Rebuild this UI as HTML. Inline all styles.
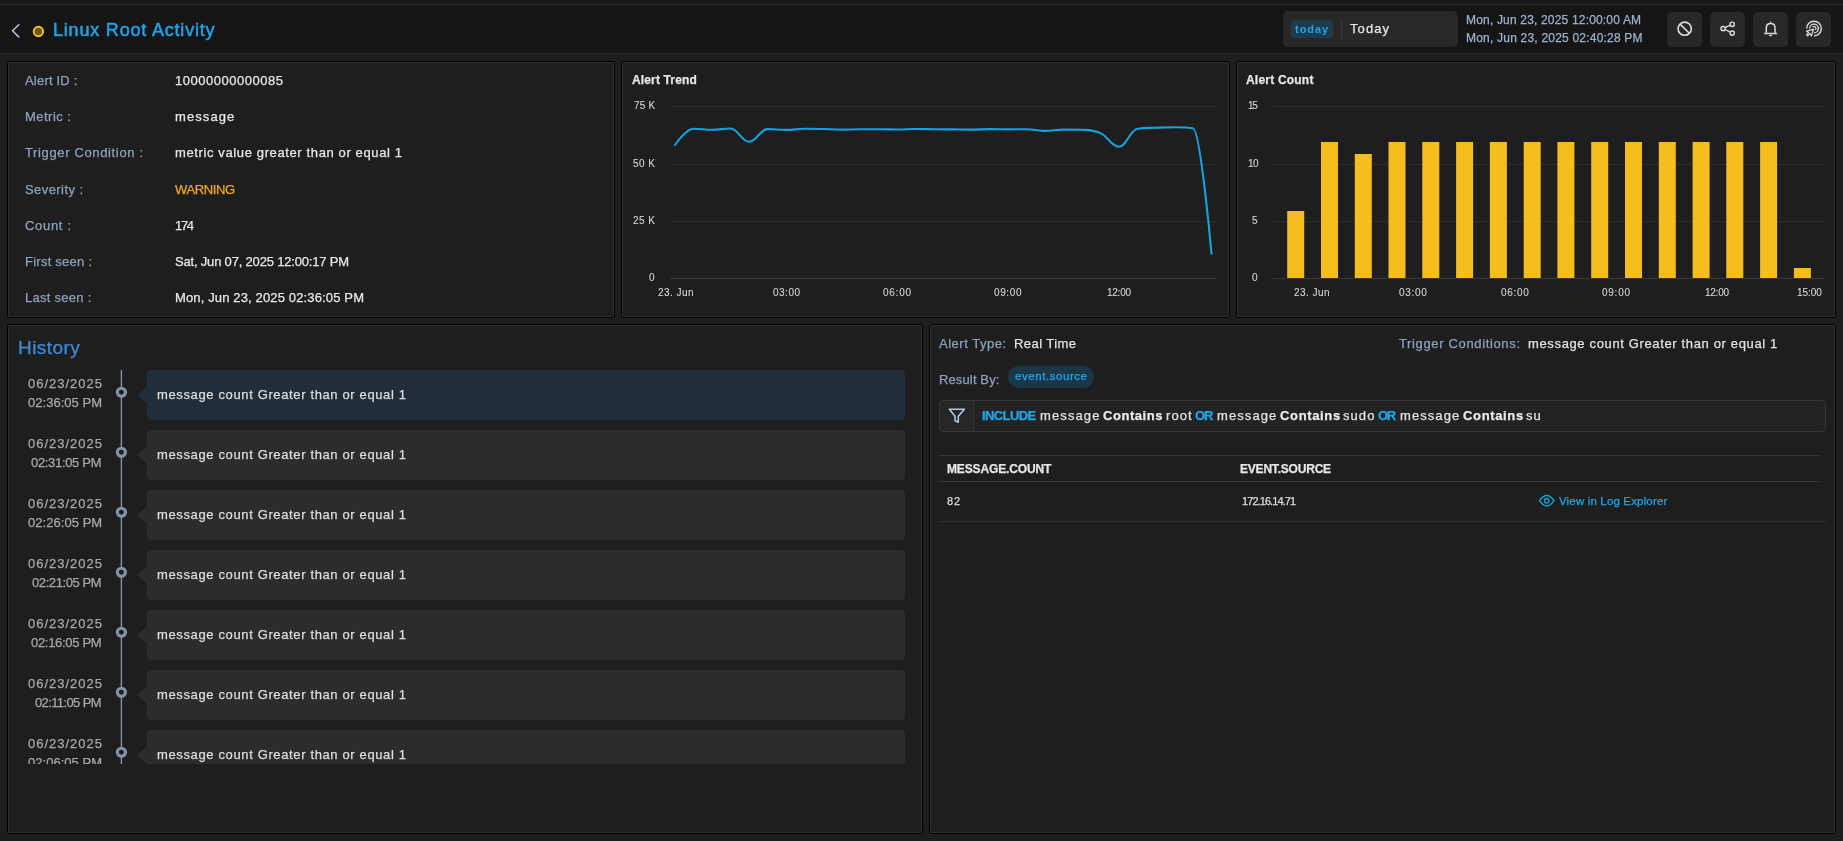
<!DOCTYPE html><html><head><meta charset="utf-8"><style>
*{margin:0;padding:0;box-sizing:content-box}
html,body{width:1843px;height:841px;overflow:hidden;background:#1d1d1d;font-family:"Liberation Sans",sans-serif}
.t{position:absolute;white-space:nowrap;line-height:1;will-change:transform;-webkit-text-stroke:0.25px currentColor}
.panel{position:absolute;background:#1e1e1e;border:1px solid #000;border-radius:2.5px;box-shadow:inset 0 0 0 1px #2e2e2e}
svg{position:absolute;overflow:visible}
</style></head><body>
<div style="position:absolute;left:0px;top:0px;width:1843px;height:4px;background:#171717;"></div>
<div style="position:absolute;left:0px;top:4px;width:1843px;height:1px;background:#303030;"></div>
<div style="position:absolute;left:0px;top:5px;width:1843px;height:48px;background:#151515;"></div>
<div style="position:absolute;left:0px;top:53px;width:1843px;height:1px;background:#262626;"></div>
<svg style="left:0;top:0" width="60" height="54"><path d="M19.2 24.2 L12.6 30.8 L19.2 37.4" fill="none" stroke="#b4c4dc" stroke-width="1.5"/><circle cx="38.4" cy="31.5" r="4.7" fill="#6a5920" stroke="#f6c21c" stroke-width="1.9"/></svg>
<div class="t" style="left:53.00px;top:20.76px;font-size:18px;color:#1ba6ea;font-weight:400;letter-spacing:0.807px;-webkit-text-stroke:0.5px currentColor;">Linux Root Activity</div>
<div style="position:absolute;left:1283px;top:11px;width:175px;height:36px;background:#282828;border-radius:5px;"></div>
<div style="position:absolute;left:1291px;top:20px;width:42px;height:18px;background:#1d3b4c;border-radius:4px;"></div>
<div class="t" style="left:1295.00px;top:23.69px;font-size:11px;color:#1ca8ec;font-weight:700;letter-spacing:0.964px;-webkit-text-stroke:0;">today</div>
<div style="position:absolute;left:1341px;top:19px;width:1px;height:20px;background:#3a3a3a;"></div>
<div class="t" style="left:1350.00px;top:22.00px;font-size:13px;color:#e8e8e8;font-weight:400;letter-spacing:1.099px;">Today</div>
<div class="t" style="left:1466.00px;top:13.84px;font-size:12px;color:#9fb2cc;font-weight:400;letter-spacing:0.178px;">Mon, Jun 23, 2025 12:00:00 AM</div>
<div class="t" style="left:1466.00px;top:31.84px;font-size:12px;color:#9fb2cc;font-weight:400;letter-spacing:0.207px;">Mon, Jun 23, 2025 02:40:28 PM</div>
<div style="position:absolute;left:1667px;top:12px;width:35px;height:35px;background:#282828;border-radius:5px;"></div>
<div style="position:absolute;left:1710px;top:12px;width:35px;height:35px;background:#282828;border-radius:5px;"></div>
<div style="position:absolute;left:1753px;top:12px;width:35px;height:35px;background:#282828;border-radius:5px;"></div>
<div style="position:absolute;left:1796px;top:12px;width:35px;height:35px;background:#282828;border-radius:5px;"></div>
<svg style="left:0;top:0" width="1843" height="54"><circle cx="1684.7" cy="28.7" r="6.6" fill="none" stroke="#dcdcdc" stroke-width="1.6"/><path d="M1680.1 24.1 L1689.3 33.3" stroke="#dcdcdc" stroke-width="1.6"/><circle cx="1732.2" cy="24.3" r="2.15" fill="none" stroke="#dcdcdc" stroke-width="1.4"/><circle cx="1723.1" cy="28.6" r="2.15" fill="none" stroke="#dcdcdc" stroke-width="1.4"/><circle cx="1732.2" cy="33.1" r="2.15" fill="none" stroke="#dcdcdc" stroke-width="1.4"/><path d="M1725 27.7 L1730.3 25.2 M1725 29.5 L1730.3 32.2" stroke="#dcdcdc" stroke-width="1.4"/><path d="M1766.3 32.6 V28 C1766.3 25.1 1768.2 23.4 1770.65 23.4 C1773.1 23.4 1775 25.1 1775 28 V32.6" fill="none" stroke="#dcdcdc" stroke-width="1.5"/><path d="M1764.2 33.5 H1777.1" stroke="#dcdcdc" stroke-width="1.5"/><path d="M1764.4 33.9 L1766.6 31.5 L1766.6 33.9 Z M1776.9 33.9 L1774.7 31.5 L1774.7 33.9 Z" fill="#dcdcdc"/><path d="M1769.7 23.8 L1770.65 20.8 L1771.6 23.8 Z" fill="#dcdcdc"/><ellipse cx="1770.65" cy="35.5" rx="1.7" ry="0.8" fill="#dcdcdc"/><path d="M1806.7 28.5 A7.3 7.3 0 1 1 1814 35.8" fill="none" stroke="#dcdcdc" stroke-width="1.4"/><path d="M1809.6 28.5 A4.4 4.4 0 1 1 1814 32.9" fill="none" stroke="#dcdcdc" stroke-width="1.4"/><path d="M1812.6 27.1 A1.9 1.9 0 0 1 1815.4 29.9" fill="none" stroke="#dcdcdc" stroke-width="1.3"/><path d="M1813.6 29.2 L1806.6 31.2 L1808.7 32.5 L1806.5 34.8 L1807.6 35.9 L1809.9 33.7 L1811.4 35.8 Z" fill="#282828" stroke="#dcdcdc" stroke-width="1.2" stroke-linejoin="round"/></svg>
<div class="panel" style="left:7px;top:61px;width:606px;height:255px;"></div>
<div class="panel" style="left:621px;top:61px;width:607px;height:255px;"></div>
<div class="panel" style="left:1236px;top:61px;width:598px;height:255px;"></div>
<div class="panel" style="left:7px;top:324px;width:914px;height:508px;"></div>
<div class="panel" style="left:929px;top:324px;width:905px;height:508px;"></div>
<div class="t" style="left:25.00px;top:74.00px;font-size:13px;color:#8ea2bd;font-weight:400;letter-spacing:0.202px;">Alert ID :</div>
<div class="t" style="left:175.00px;top:74.00px;font-size:13px;color:#e8e8e8;font-weight:400;letter-spacing:0.520px;">10000000000085</div>
<div class="t" style="left:25.00px;top:110.17px;font-size:13px;color:#8ea2bd;font-weight:400;letter-spacing:0.482px;">Metric :</div>
<div class="t" style="left:175.00px;top:110.17px;font-size:13px;color:#e8e8e8;font-weight:400;letter-spacing:1.092px;">message</div>
<div class="t" style="left:25.00px;top:146.34px;font-size:13px;color:#8ea2bd;font-weight:400;letter-spacing:0.641px;">Trigger Condition :</div>
<div class="t" style="left:175.00px;top:146.34px;font-size:13px;color:#e8e8e8;font-weight:400;letter-spacing:0.622px;">metric value greater than or equal 1</div>
<div class="t" style="left:25.00px;top:182.51px;font-size:13px;color:#8ea2bd;font-weight:400;letter-spacing:0.424px;">Severity :</div>
<div class="t" style="left:175.00px;top:182.51px;font-size:13px;color:#f0a91e;font-weight:400;letter-spacing:-0.393px;">WARNING</div>
<div class="t" style="left:25.00px;top:218.68px;font-size:13px;color:#8ea2bd;font-weight:400;letter-spacing:0.680px;">Count :</div>
<div class="t" style="left:175.00px;top:218.68px;font-size:13px;color:#e8e8e8;font-weight:400;letter-spacing:-1.352px;">174</div>
<div class="t" style="left:25.00px;top:254.85px;font-size:13px;color:#8ea2bd;font-weight:400;letter-spacing:0.246px;">First seen :</div>
<div class="t" style="left:175.00px;top:254.85px;font-size:13px;color:#e8e8e8;font-weight:400;letter-spacing:-0.188px;">Sat, Jun 07, 2025 12:00:17 PM</div>
<div class="t" style="left:25.00px;top:291.02px;font-size:13px;color:#8ea2bd;font-weight:400;letter-spacing:0.269px;">Last seen :</div>
<div class="t" style="left:175.00px;top:291.02px;font-size:13px;color:#e8e8e8;font-weight:400;letter-spacing:0.142px;">Mon, Jun 23, 2025 02:36:05 PM</div>
<div class="t" style="left:632.00px;top:74.44px;font-size:12px;color:#e6e6e6;font-weight:700;letter-spacing:0.144px;">Alert Trend</div>
<div class="t" style="left:1246.00px;top:74.44px;font-size:12px;color:#e6e6e6;font-weight:700;letter-spacing:0.207px;">Alert Count</div>
<svg style="left:0;top:0" width="1843" height="841"><rect x="670" y="106" width="547" height="1" fill="#2c2c2c"/><rect x="1273" y="106" width="551" height="1" fill="#2c2c2c"/><rect x="670" y="164" width="547" height="1" fill="#2c2c2c"/><rect x="1273" y="164" width="551" height="1" fill="#2c2c2c"/><rect x="670" y="221" width="547" height="1" fill="#2c2c2c"/><rect x="1273" y="221" width="551" height="1" fill="#2c2c2c"/><rect x="670" y="278" width="547" height="1" fill="#3a3a3a"/><rect x="1273" y="278" width="551" height="1" fill="#3a3a3a"/><path d="M675.00,145.00 C675.00,145.00 686.10,128.70 693.50,128.70 C700.90,128.70 704.60,129.80 712.00,129.80 C719.40,129.80 723.10,128.50 730.50,128.50 C737.90,128.50 741.60,141.80 749.00,141.80 C756.40,141.80 760.10,129.10 767.50,129.10 C774.90,129.10 778.60,129.90 786.00,129.90 C793.40,129.90 797.10,128.80 804.50,128.80 C811.90,128.80 815.60,128.84 823.00,129.00 C830.40,129.16 834.10,129.60 841.50,129.60 C848.90,129.60 852.60,129.38 860.00,129.30 C867.40,129.22 871.10,129.20 878.50,129.20 C885.90,129.20 889.60,129.50 897.00,129.50 C904.40,129.50 908.10,129.00 915.50,129.00 C922.90,129.00 926.60,129.22 934.00,129.30 C941.40,129.38 945.10,129.34 952.50,129.40 C959.90,129.46 963.60,129.60 971.00,129.60 C978.40,129.60 982.10,129.10 989.50,129.10 C996.90,129.10 1000.60,129.40 1008.00,129.40 C1015.40,129.40 1019.10,129.20 1026.50,129.20 C1033.90,129.20 1037.60,130.90 1045.00,130.90 C1052.40,130.90 1056.10,129.60 1063.50,129.60 C1070.90,129.60 1074.60,129.60 1082.00,129.80 C1089.40,130.00 1093.10,129.80 1100.50,133.10 C1107.90,136.40 1111.60,146.70 1119.00,146.70 C1126.40,146.70 1130.10,129.70 1137.50,128.70 C1144.90,127.70 1148.60,128.00 1156.00,127.70 C1163.40,127.40 1167.10,127.20 1174.50,127.20 C1181.90,127.20 1185.60,127.20 1193.00,128.20 C1200.40,129.20 1211.50,253.60 1211.50,253.60" fill="none" stroke="#12a3e0" stroke-width="2.1" stroke-linecap="round" stroke-linejoin="round"/><rect x="1287.2" y="211" width="17" height="67" fill="#f5bd1d"/><rect x="1321.0" y="142" width="17" height="136" fill="#f5bd1d"/><rect x="1354.8" y="154" width="17" height="124" fill="#f5bd1d"/><rect x="1388.5" y="142" width="17" height="136" fill="#f5bd1d"/><rect x="1422.3" y="142" width="17" height="136" fill="#f5bd1d"/><rect x="1456.1" y="142" width="17" height="136" fill="#f5bd1d"/><rect x="1489.9" y="142" width="17" height="136" fill="#f5bd1d"/><rect x="1523.7" y="142" width="17" height="136" fill="#f5bd1d"/><rect x="1557.4" y="142" width="17" height="136" fill="#f5bd1d"/><rect x="1591.2" y="142" width="17" height="136" fill="#f5bd1d"/><rect x="1625.0" y="142" width="17" height="136" fill="#f5bd1d"/><rect x="1658.8" y="142" width="17" height="136" fill="#f5bd1d"/><rect x="1692.6" y="142" width="17" height="136" fill="#f5bd1d"/><rect x="1726.3" y="142" width="17" height="136" fill="#f5bd1d"/><rect x="1760.1" y="142" width="17" height="136" fill="#f5bd1d"/><rect x="1793.9" y="268" width="17" height="10" fill="#f5bd1d"/></svg>
<div class="t" style="left:633.70px;top:101.13px;font-size:10px;color:#d6d6d6;font-weight:400;letter-spacing:0.241px;-webkit-text-stroke:0.1px currentColor;">75 K</div>
<div class="t" style="left:633.00px;top:159.13px;font-size:10px;color:#d6d6d6;font-weight:400;letter-spacing:0.474px;-webkit-text-stroke:0.1px currentColor;">50 K</div>
<div class="t" style="left:633.00px;top:216.13px;font-size:10px;color:#d6d6d6;font-weight:400;letter-spacing:0.474px;-webkit-text-stroke:0.1px currentColor;">25 K</div>
<div class="t" style="left:649.44px;top:273.14px;font-size:10px;color:#d6d6d6;font-weight:400;-webkit-text-stroke:0.1px currentColor;">0</div>
<div class="t" style="left:657.50px;top:287.54px;font-size:10px;color:#d6d6d6;font-weight:400;letter-spacing:0.448px;-webkit-text-stroke:0.1px currentColor;">23. Jun</div>
<div class="t" style="left:773.00px;top:287.54px;font-size:10px;color:#d6d6d6;font-weight:400;letter-spacing:0.492px;-webkit-text-stroke:0.1px currentColor;">03:00</div>
<div class="t" style="left:883.00px;top:287.54px;font-size:10px;color:#d6d6d6;font-weight:400;letter-spacing:0.742px;-webkit-text-stroke:0.1px currentColor;">06:00</div>
<div class="t" style="left:994.25px;top:287.54px;font-size:10px;color:#d6d6d6;font-weight:400;letter-spacing:0.617px;-webkit-text-stroke:0.1px currentColor;">09:00</div>
<div class="t" style="left:1107.00px;top:287.54px;font-size:10px;color:#d6d6d6;font-weight:400;letter-spacing:-0.258px;-webkit-text-stroke:0.1px currentColor;">12:00</div>
<div class="t" style="left:1248.20px;top:101.13px;font-size:10px;color:#d6d6d6;font-weight:400;letter-spacing:-1.325px;-webkit-text-stroke:0.1px currentColor;">15</div>
<div class="t" style="left:1247.50px;top:159.13px;font-size:10px;color:#d6d6d6;font-weight:400;letter-spacing:-0.625px;-webkit-text-stroke:0.1px currentColor;">10</div>
<div class="t" style="left:1252.44px;top:216.13px;font-size:10px;color:#d6d6d6;font-weight:400;-webkit-text-stroke:0.1px currentColor;">5</div>
<div class="t" style="left:1252.44px;top:273.14px;font-size:10px;color:#d6d6d6;font-weight:400;-webkit-text-stroke:0.1px currentColor;">0</div>
<div class="t" style="left:1293.90px;top:287.54px;font-size:10px;color:#d6d6d6;font-weight:400;letter-spacing:0.465px;-webkit-text-stroke:0.1px currentColor;">23. Jun</div>
<div class="t" style="left:1399.15px;top:287.54px;font-size:10px;color:#d6d6d6;font-weight:400;letter-spacing:0.667px;-webkit-text-stroke:0.1px currentColor;">03:00</div>
<div class="t" style="left:1500.55px;top:287.54px;font-size:10px;color:#d6d6d6;font-weight:400;letter-spacing:0.717px;-webkit-text-stroke:0.1px currentColor;">06:00</div>
<div class="t" style="left:1602.00px;top:287.54px;font-size:10px;color:#d6d6d6;font-weight:400;letter-spacing:0.742px;-webkit-text-stroke:0.1px currentColor;">09:00</div>
<div class="t" style="left:1705.00px;top:287.54px;font-size:10px;color:#d6d6d6;font-weight:400;letter-spacing:-0.258px;-webkit-text-stroke:0.1px currentColor;">12:00</div>
<div class="t" style="left:1797.20px;top:287.54px;font-size:10px;color:#d6d6d6;font-weight:400;letter-spacing:-0.058px;-webkit-text-stroke:0.1px currentColor;">15:00</div>
<div class="t" style="left:17.50px;top:338.32px;font-size:19px;color:#3b8ddf;font-weight:400;letter-spacing:0.446px;">History</div>
<div style="position:absolute;left:8px;top:370px;width:913px;height:394px;overflow:hidden">
<svg style="left:0;top:0" width="120" height="394"><rect x="112.7" y="0" width="1.4" height="394" fill="#8193a8"/></svg>
<div style="position:absolute;left:139px;top:0px;width:758px;height:50px;background:#212d3a;border-radius:4px"></div>
<svg style="left:129px;top:0px" width="10" height="50"><path d="M0.1 25 L10.2 15.7 L10.2 34.2 Z" fill="#212d3a"/></svg>
<svg style="left:0;top:0px" width="130" height="50"><circle cx="113.4" cy="22.3" r="4.07" fill="#1e1e1e" stroke="#8193a8" stroke-width="3.15"/></svg>
<div class="t" style="left:19.90px;top:7.00px;font-size:13px;color:#a9a9a9;font-weight:400;letter-spacing:0.991px;">06/23/2025</div>
<div class="t" style="left:19.90px;top:26.00px;font-size:13px;color:#a9a9a9;font-weight:400;letter-spacing:0.028px;">02:36:05 PM</div>
<div class="t" style="left:149.20px;top:17.70px;font-size:13px;color:#dedede;font-weight:400;letter-spacing:0.633px;">message count Greater than or equal 1</div>
<div style="position:absolute;left:139px;top:60px;width:758px;height:50px;background:#2c2c2c;border-radius:4px"></div>
<svg style="left:129px;top:60px" width="10" height="50"><path d="M0.1 25 L10.2 15.7 L10.2 34.2 Z" fill="#2c2c2c"/></svg>
<svg style="left:0;top:60px" width="130" height="50"><circle cx="113.4" cy="22.3" r="4.07" fill="#1e1e1e" stroke="#8193a8" stroke-width="3.15"/></svg>
<div class="t" style="left:19.90px;top:67.00px;font-size:13px;color:#a9a9a9;font-weight:400;letter-spacing:0.991px;">06/23/2025</div>
<div class="t" style="left:23.40px;top:86.00px;font-size:13px;color:#a9a9a9;font-weight:400;letter-spacing:-0.322px;">02:31:05 PM</div>
<div class="t" style="left:149.20px;top:77.70px;font-size:13px;color:#dedede;font-weight:400;letter-spacing:0.633px;">message count Greater than or equal 1</div>
<div style="position:absolute;left:139px;top:120px;width:758px;height:50px;background:#2c2c2c;border-radius:4px"></div>
<svg style="left:129px;top:120px" width="10" height="50"><path d="M0.1 25 L10.2 15.7 L10.2 34.2 Z" fill="#2c2c2c"/></svg>
<svg style="left:0;top:120px" width="130" height="50"><circle cx="113.4" cy="22.3" r="4.07" fill="#1e1e1e" stroke="#8193a8" stroke-width="3.15"/></svg>
<div class="t" style="left:19.90px;top:127.00px;font-size:13px;color:#a9a9a9;font-weight:400;letter-spacing:0.991px;">06/23/2025</div>
<div class="t" style="left:19.70px;top:146.00px;font-size:13px;color:#a9a9a9;font-weight:400;letter-spacing:0.048px;">02:26:05 PM</div>
<div class="t" style="left:149.20px;top:137.70px;font-size:13px;color:#dedede;font-weight:400;letter-spacing:0.633px;">message count Greater than or equal 1</div>
<div style="position:absolute;left:139px;top:180px;width:758px;height:50px;background:#2c2c2c;border-radius:4px"></div>
<svg style="left:129px;top:180px" width="10" height="50"><path d="M0.1 25 L10.2 15.7 L10.2 34.2 Z" fill="#2c2c2c"/></svg>
<svg style="left:0;top:180px" width="130" height="50"><circle cx="113.4" cy="22.3" r="4.07" fill="#1e1e1e" stroke="#8193a8" stroke-width="3.15"/></svg>
<div class="t" style="left:19.90px;top:187.00px;font-size:13px;color:#a9a9a9;font-weight:400;letter-spacing:0.991px;">06/23/2025</div>
<div class="t" style="left:24.20px;top:206.00px;font-size:13px;color:#a9a9a9;font-weight:400;letter-spacing:-0.402px;">02:21:05 PM</div>
<div class="t" style="left:149.20px;top:197.70px;font-size:13px;color:#dedede;font-weight:400;letter-spacing:0.633px;">message count Greater than or equal 1</div>
<div style="position:absolute;left:139px;top:240px;width:758px;height:50px;background:#2c2c2c;border-radius:4px"></div>
<svg style="left:129px;top:240px" width="10" height="50"><path d="M0.1 25 L10.2 15.7 L10.2 34.2 Z" fill="#2c2c2c"/></svg>
<svg style="left:0;top:240px" width="130" height="50"><circle cx="113.4" cy="22.3" r="4.07" fill="#1e1e1e" stroke="#8193a8" stroke-width="3.15"/></svg>
<div class="t" style="left:19.90px;top:247.00px;font-size:13px;color:#a9a9a9;font-weight:400;letter-spacing:0.991px;">06/23/2025</div>
<div class="t" style="left:23.20px;top:266.00px;font-size:13px;color:#a9a9a9;font-weight:400;letter-spacing:-0.302px;">02:16:05 PM</div>
<div class="t" style="left:149.20px;top:257.70px;font-size:13px;color:#dedede;font-weight:400;letter-spacing:0.633px;">message count Greater than or equal 1</div>
<div style="position:absolute;left:139px;top:300px;width:758px;height:50px;background:#2c2c2c;border-radius:4px"></div>
<svg style="left:129px;top:300px" width="10" height="50"><path d="M0.1 25 L10.2 15.7 L10.2 34.2 Z" fill="#2c2c2c"/></svg>
<svg style="left:0;top:300px" width="130" height="50"><circle cx="113.4" cy="22.3" r="4.07" fill="#1e1e1e" stroke="#8193a8" stroke-width="3.15"/></svg>
<div class="t" style="left:19.90px;top:307.00px;font-size:13px;color:#a9a9a9;font-weight:400;letter-spacing:0.991px;">06/23/2025</div>
<div class="t" style="left:27.30px;top:326.00px;font-size:13px;color:#a9a9a9;font-weight:400;letter-spacing:-0.617px;">02:11:05 PM</div>
<div class="t" style="left:149.20px;top:317.70px;font-size:13px;color:#dedede;font-weight:400;letter-spacing:0.633px;">message count Greater than or equal 1</div>
<div style="position:absolute;left:139px;top:360px;width:758px;height:50px;background:#2c2c2c;border-radius:4px"></div>
<svg style="left:129px;top:360px" width="10" height="50"><path d="M0.1 25 L10.2 15.7 L10.2 34.2 Z" fill="#2c2c2c"/></svg>
<svg style="left:0;top:360px" width="130" height="50"><circle cx="113.4" cy="22.3" r="4.07" fill="#1e1e1e" stroke="#8193a8" stroke-width="3.15"/></svg>
<div class="t" style="left:19.90px;top:367.00px;font-size:13px;color:#a9a9a9;font-weight:400;letter-spacing:0.991px;">06/23/2025</div>
<div class="t" style="left:19.90px;top:386.00px;font-size:13px;color:#a9a9a9;font-weight:400;letter-spacing:0.028px;">02:06:05 PM</div>
<div class="t" style="left:149.20px;top:377.70px;font-size:13px;color:#dedede;font-weight:400;letter-spacing:0.633px;">message count Greater than or equal 1</div>
</div>
<div class="t" style="left:938.90px;top:337.00px;font-size:13px;color:#8ea2bd;font-weight:400;letter-spacing:0.509px;">Alert Type:</div>
<div class="t" style="left:1013.70px;top:337.00px;font-size:13px;color:#e2e2e2;font-weight:400;letter-spacing:0.434px;">Real Time</div>
<div class="t" style="left:1398.80px;top:337.00px;font-size:13px;color:#8ea2bd;font-weight:400;letter-spacing:0.647px;">Trigger Conditions:</div>
<div class="t" style="left:1528.20px;top:337.00px;font-size:13px;color:#e2e2e2;font-weight:400;letter-spacing:0.642px;">message count Greater than or equal 1</div>
<div class="t" style="left:939.00px;top:373.00px;font-size:13px;color:#8ea2bd;font-weight:400;letter-spacing:0.128px;">Result By:</div>
<div style="position:absolute;left:1008px;top:366px;width:86px;height:22px;background:#1b3747;border-radius:11px;"></div>
<div class="t" style="left:1015.00px;top:371.27px;font-size:11.5px;color:#1ca8ec;font-weight:400;letter-spacing:0.558px;">event.source</div>
<div style="position:absolute;left:939px;top:400px;width:885px;height:30px;border:1px solid #363636;border-radius:4px;background:#232323"></div>
<div style="position:absolute;left:940px;top:401px;width:33px;height:30px;background:#262626;border-radius:3px 0 0 3px;"></div>
<div style="position:absolute;left:973px;top:401px;width:1px;height:30px;background:#363636;"></div>
<svg style="left:0;top:0" width="1843" height="841"><path d="M949.4 409.2 H964.4 L958.3 416.3 V422.2 L955 420.8 V416.3 Z" fill="none" stroke="#b8cce0" stroke-width="1.5" stroke-linejoin="round"/></svg>
<div class="t" style="left:982.30px;top:409.00px;font-size:13px;color:#1ca8ec;font-weight:700;letter-spacing:-0.597px;">INCLUDE</div>
<div class="t" style="left:1040.10px;top:409.00px;font-size:13px;color:#e2e2e2;font-weight:400;letter-spacing:1.108px;">message</div>
<div class="t" style="left:1103.30px;top:409.00px;font-size:13px;color:#ececec;font-weight:700;letter-spacing:0.539px;">Contains</div>
<div class="t" style="left:1165.80px;top:409.00px;font-size:13px;color:#e2e2e2;font-weight:400;letter-spacing:1.098px;">root</div>
<div class="t" style="left:1195.10px;top:409.00px;font-size:13px;color:#1ca8ec;font-weight:700;letter-spacing:-1.100px;">OR</div>
<div class="t" style="left:1217.20px;top:409.00px;font-size:13px;color:#e2e2e2;font-weight:400;letter-spacing:1.092px;">message</div>
<div class="t" style="left:1279.90px;top:409.00px;font-size:13px;color:#ececec;font-weight:700;letter-spacing:0.654px;">Contains</div>
<div class="t" style="left:1342.90px;top:409.00px;font-size:13px;color:#e2e2e2;font-weight:400;letter-spacing:1.066px;">sudo</div>
<div class="t" style="left:1378.00px;top:409.00px;font-size:13px;color:#1ca8ec;font-weight:700;letter-spacing:-1.400px;">OR</div>
<div class="t" style="left:1399.90px;top:409.00px;font-size:13px;color:#e2e2e2;font-weight:400;letter-spacing:1.075px;">message</div>
<div class="t" style="left:1462.60px;top:409.00px;font-size:13px;color:#ececec;font-weight:700;letter-spacing:0.654px;">Contains</div>
<div class="t" style="left:1525.60px;top:409.00px;font-size:13px;color:#e2e2e2;font-weight:400;letter-spacing:1.066px;">su</div>
<div style="position:absolute;left:939px;top:455px;width:880px;height:1px;background:#393939;"></div>
<div style="position:absolute;left:939px;top:481px;width:880px;height:1px;background:#393939;"></div>
<div style="position:absolute;left:939px;top:521px;width:887px;height:1px;background:#303030;"></div>
<div class="t" style="left:946.60px;top:463.24px;font-size:12px;color:#e6e6e6;font-weight:700;letter-spacing:-0.135px;">MESSAGE.COUNT</div>
<div class="t" style="left:1239.80px;top:463.24px;font-size:12px;color:#e6e6e6;font-weight:700;letter-spacing:-0.205px;">EVENT.SOURCE</div>
<div class="t" style="left:946.60px;top:495.89px;font-size:11px;color:#dedede;font-weight:400;letter-spacing:0.950px;">82</div>
<div class="t" style="left:1242.40px;top:495.89px;font-size:11px;color:#dedede;font-weight:400;letter-spacing:-0.930px;">172.16.14.71</div>
<svg style="left:0;top:0" width="1843" height="841"><path d="M1539.5 500.7 Q1546.7 490.3 1554 500.7 Q1546.7 511.2 1539.5 500.7 Z" fill="none" stroke="#14a3e0" stroke-width="1.4" stroke-linejoin="round"/><circle cx="1546.7" cy="500.8" r="2.3" fill="none" stroke="#14a3e0" stroke-width="1.3"/></svg>
<div class="t" style="left:1558.90px;top:496.27px;font-size:11.5px;color:#1ca8ec;font-weight:400;letter-spacing:0.160px;">View in Log Explorer</div>
</body></html>
